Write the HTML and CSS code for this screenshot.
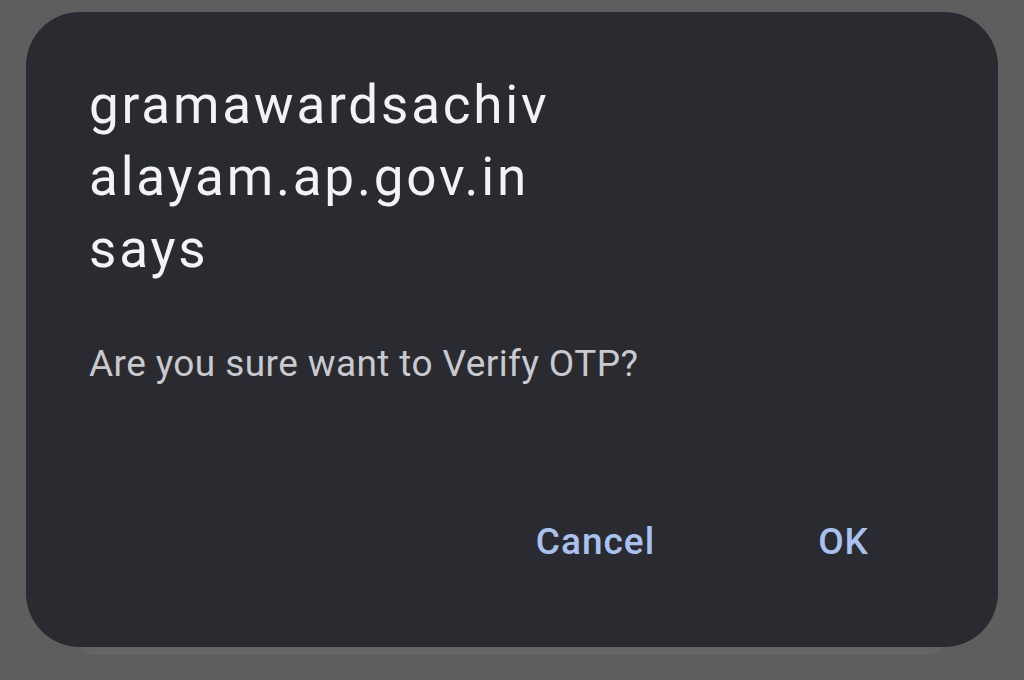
FILE: index.html
```html
<!DOCTYPE html>
<html lang="en">
<head>
<meta charset="utf-8">
<title>Dialog</title>
<link rel="stylesheet" href="styles.css">
</head>
<body>
<div class="screen">
  <div class="dialog">
    <h1 class="title">gramawardsachiv<br>alayam.ap.gov.in<br>says</h1>
    <p class="message">Are you sure want to Verify OTP?</p>
    <div class="actions">
      <span class="btn">Cancel</span>
      <span class="btn">OK</span>
    </div>
  </div>
  <div class="under"></div>
</div>
</body>
</html>
```
FILE: styles.css
```css
html, body {
  margin: 0;
  padding: 0;
  width: 1024px;
  height: 680px;
  overflow: hidden;
  background: #5e5e5e;
}
.screen {
  display: flex;
  flex-direction: column;
  padding: 12px 26px 0 26px;
}
.dialog {
  box-sizing: border-box;
  height: 635px;
  background: #2a2b30;
  border-radius: 54px;
  padding: 57px 63px 0 63px;
  display: flex;
  flex-direction: column;
  font-family: Roboto, "Noto Sans", sans-serif;
}
.title {
  margin: 0;
  font-weight: 400;
  font-size: 53px;
  line-height: 72px;
  color: #f3f3f5;
  letter-spacing: 2.8px;
}
.message {
  margin: 55px 0 0 0;
  font-size: 37px;
  line-height: 48px;
  color: #c9c9ce;
  letter-spacing: 0.4px;
}
.actions {
  margin-top: 130px;
  margin-right: 66px;
  display: flex;
  justify-content: flex-end;
  gap: 163px;
}
.btn {
  font-size: 37px;
  line-height: 48px;
  font-weight: 500;
  color: #a9c1ee;
  letter-spacing: 1px;
}
.under {
  height: 8px;
  margin: 0 58px 0 57px;
  background: #646464;
  border-radius: 0 0 6px 6px;
}
```
